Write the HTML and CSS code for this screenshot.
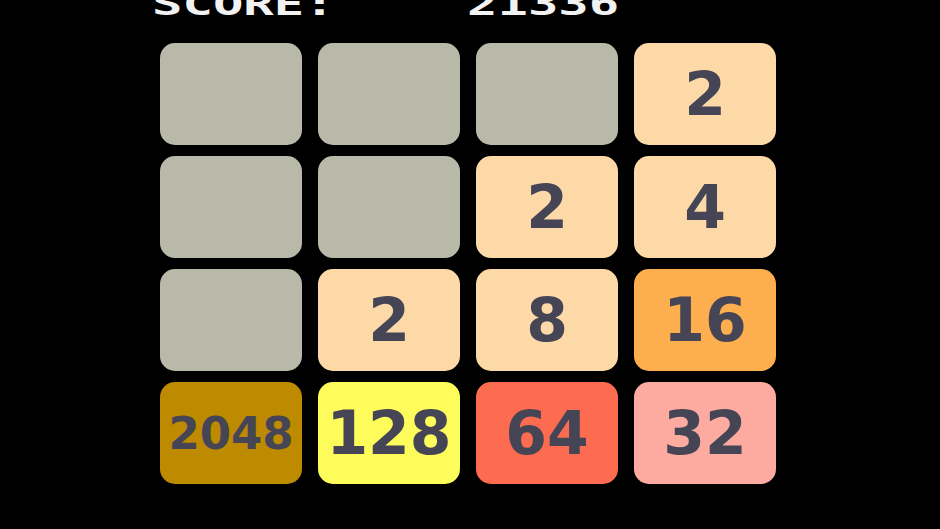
FILE: index.html
```html
<!DOCTYPE html>
<html lang="en">
<head>
<meta charset="utf-8">
<title>2048</title>
<link rel="stylesheet" href="styles.css">
</head>
<body>
<main class="game">
  <header class="scorebar">
    <span class="score-label">SCORE:</span>
    <span class="score-value">21336</span>
  </header>
  <section class="board">
    <div class="tile empty"></div>
    <div class="tile empty"></div>
    <div class="tile empty"></div>
    <div class="tile t2">2</div>

    <div class="tile empty"></div>
    <div class="tile empty"></div>
    <div class="tile t2">2</div>
    <div class="tile t4">4</div>

    <div class="tile empty"></div>
    <div class="tile t2">2</div>
    <div class="tile t8">8</div>
    <div class="tile t16">16</div>

    <div class="tile t2048">2048</div>
    <div class="tile t128">128</div>
    <div class="tile t64">64</div>
    <div class="tile t32">32</div>
  </section>
</main>
</body>
</html>
```

FILE: styles.css
```css
html, body {
  margin: 0;
  padding: 0;
  background: #000;
  width: 940px;
  height: 529px;
  overflow: hidden;
}

.game {
  display: flex;
  flex-direction: column;
}

/* score line, partly scrolled off the top edge */
.scorebar {
  display: flex;
  height: 13px;
  padding-left: 152px;
}

.score-label,
.score-value {
  font-family: "DejaVu Sans Mono", "Liberation Mono", monospace;
  font-weight: bold;
  font-size: 32px;
  line-height: 1;
  color: #f2f2f2;
  display: block;
  transform-origin: left bottom;
  transform: scaleX(1.58);
  margin-top: -12px;
  white-space: nowrap;
}

.score-label {
  width: 315px;
}

.board {
  display: grid;
  grid-template-columns: repeat(4, 142px);
  grid-auto-rows: 102px;
  column-gap: 16px;
  row-gap: 11px;
  margin-top: 30px;
  margin-left: 160px;
}

.tile {
  border-radius: 15px;
  display: flex;
  align-items: center;
  justify-content: center;
  font-family: "DejaVu Sans", "Verdana", sans-serif;
  font-weight: bold;
  font-size: 60px;
  color: #454556;
  line-height: 1;
  box-sizing: border-box;
}

.empty { background: #b9b9aa; }
.t2, .t4, .t8 { background: #fdd9a8; }
.t16 { background: #fdae4e; }
.t32 { background: #fdaaa0; }
.t64 { background: #fd6b50; }
.t128 { background: #fdfc5a; }
.t2048 {
  background: #bd8a00;
  font-size: 45px;
}
```
